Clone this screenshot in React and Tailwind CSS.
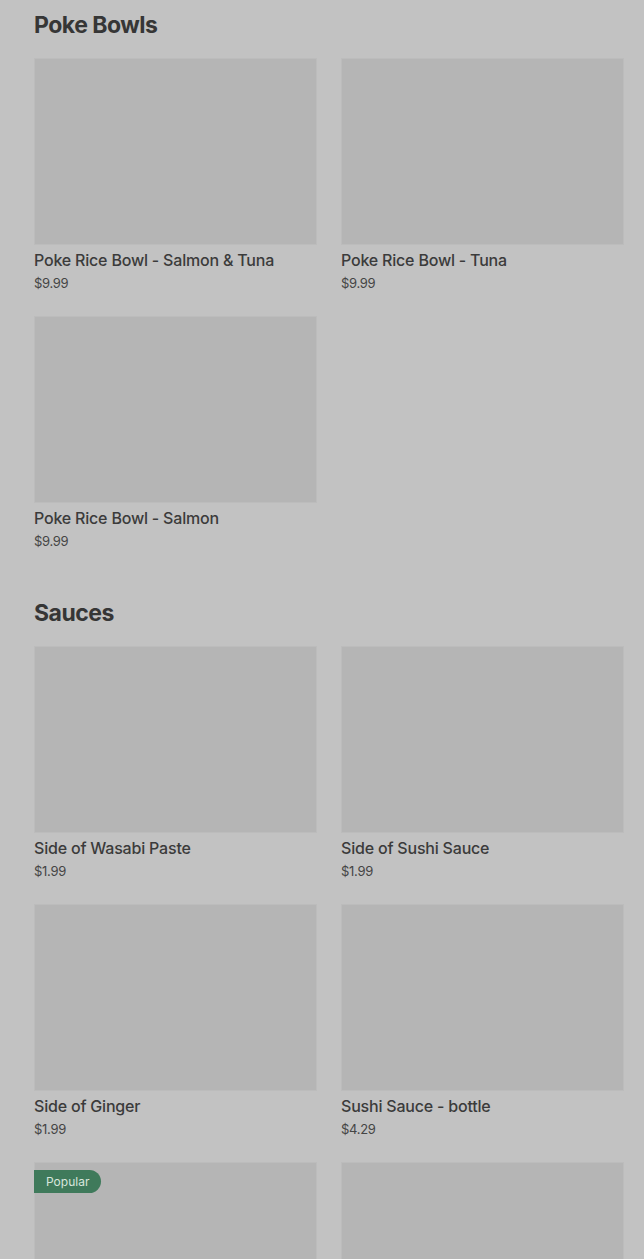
const SECTIONS = [
  {
    title: "Poke Bowls",
    items: [
      { name: "Poke Rice Bowl - Salmon & Tuna", price: "$9.99" },
      { name: "Poke Rice Bowl - Tuna", price: "$9.99" },
      { name: "Poke Rice Bowl - Salmon", price: "$9.99" },
    ],
  },
  {
    title: "Sauces",
    items: [
      { name: "Side of Wasabi Paste", price: "$1.99" },
      { name: "Side of Sushi Sauce", price: "$1.99" },
      { name: "Side of Ginger", price: "$1.99" },
      { name: "Sushi Sauce - bottle", price: "$4.29" },
      { name: "Sushi Sauce - mild", price: "$4.29", popular: true },
      { name: "Sushi Sauce - spicy", price: "$4.29" },
    ],
  },
];

function ItemCard({ item }) {
  return (
    <div className="flex flex-col">
      <div className="relative h-[187px] bg-[#b5b5b5] border border-[#bcbcbc]">
        {item.popular && (
          <span className="absolute left-[-1px] top-[7px] h-[23px] px-3 flex items-center rounded-r-full bg-[#3f7a5b] text-[12px] text-[#d8e6dd]">
            Popular
          </span>
        )}
      </div>
      <p className="mt-[5px] h-[20px] leading-[20px] text-[16px] font-medium tracking-[-0.2px] text-[#3b3b3b] truncate">
        {item.name}
      </p>
      <p className="mt-[4px] h-[18px] leading-[18px] text-[13px] tracking-[-0.3px] text-[#454545]">
        {item.price}
      </p>
    </div>
  );
}

export default function App() {
  return (
    <div
      className="min-h-[1259px] bg-[#c2c2c2] pl-[34px] pr-[20px] pt-[9px]"
      style={{ fontFamily: "Inter, Roboto, 'Liberation Sans', sans-serif" }}
    >
      {SECTIONS.map((section) => (
        <section key={section.title} className="mb-[47px]">
          <h2 className="h-[32px] leading-[32px] text-[23px] font-bold tracking-[-0.5px] text-[#363636]">
            {section.title}
          </h2>
          <div className="mt-[17px] grid grid-cols-2 gap-x-[24px] gap-y-[24px]">
            {section.items.map((item) => (
              <ItemCard key={item.name} item={item} />
            ))}
          </div>
        </section>
      ))}
    </div>
  );
}
